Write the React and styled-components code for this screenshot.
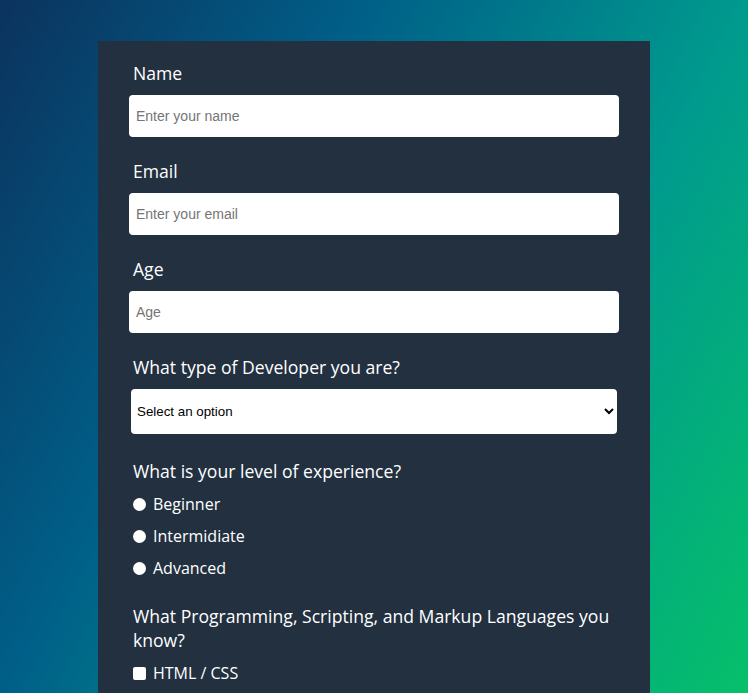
import React from "react";
import styled, { createGlobalStyle } from "styled-components";

const GlobalStyle = createGlobalStyle`
  html {
    min-height: 100%;
    background: linear-gradient(118deg, #0b335e 0%, #005f88 33%, #009a8e 67%, #06c06a 100%) fixed;
  }
  body {
    margin: 0;
    font-family: "Open Sans", "Noto Sans", sans-serif;
  }
`;

const Page = styled.div`
  display: flex;
  padding: 41px 0 40px 98px;
`;

const Form = styled.form`
  width: 552px;
  box-sizing: border-box;
  padding: 20px 31px 30px;
  background: #22303f;
  display: flex;
  flex-direction: column;
  gap: 22px;
`;

const Group = styled.div`
  display: flex;
  flex-direction: column;
  gap: ${(p) => p.$gap ?? 10}px;
`;

const Question = styled.label`
  display: block;
  padding-left: 4px;
  font-size: 17.6px;
  line-height: 24px;
  color: #ffffff;
`;

const TextInput = styled.input`
  box-sizing: border-box;
  width: 100%;
  height: 42px;
  margin: 0;
  padding: 0 7px;
  border: none;
  border-radius: 4px;
  background: #ffffff;
  font-family: "Liberation Sans", Arial, sans-serif;
  font-size: 14px;
  color: #222;
  outline: none;
  &::placeholder {
    color: #757575;
  }
`;

const Select = styled.select`
  box-sizing: border-box;
  height: 45px;
  margin: 0 2px 3px;
  padding: 0 0 0 2px;
  border: none;
  border-radius: 4px;
  background: #ffffff;
  color: #000;
  font-family: "Liberation Sans", Arial, sans-serif;
  font-size: 13.33px;
`;

const OptionList = styled.div`
  display: flex;
  flex-direction: column;
  gap: 8px;
  padding-bottom: ${(p) => p.$extra ?? 0}px;
`;

const OptionRow = styled.label`
  display: flex;
  align-items: center;
  gap: 7px;
  padding-left: 4px;
  font-size: 16px;
  line-height: 24px;
  color: #ffffff;
`;

const Mark = styled.input`
  appearance: none;
  width: 13px;
  height: 13px;
  margin: 0;
  background: #ffffff;
  border: none;
  border-radius: ${(p) => (p.type === "radio" ? "50%" : "2px")};
  flex: none;
`;

const fields = [
  { label: "Name", placeholder: "Enter your name", type: "text" },
  { label: "Email", placeholder: "Enter your email", type: "email" },
  { label: "Age", placeholder: "Age", type: "number" },
];

export default function App() {
  return (
    <>
      <GlobalStyle />
      <Page>
        <Form onSubmit={(e) => e.preventDefault()}>
          {fields.map((f) => (
            <Group key={f.label}>
              <Question htmlFor={f.label}>{f.label}</Question>
              <TextInput id={f.label} type={f.type} placeholder={f.placeholder} />
            </Group>
          ))}
          <Group>
            <Question htmlFor="dev">What type of Developer you are?</Question>
            <Select id="dev" defaultValue="">
              <option value="" disabled>
                Select an option
              </option>
              <option>Front-end</option>
              <option>Back-end</option>
              <option>Full-stack</option>
            </Select>
          </Group>
          <Group $gap={9}>
            <Question as="div">What is your level of experience?</Question>
            <OptionList $extra={2}>
              {["Beginner", "Intermidiate", "Advanced"].map((o) => (
                <OptionRow key={o}>
                  <Mark type="radio" name="level" value={o} />
                  {o}
                </OptionRow>
              ))}
            </OptionList>
          </Group>
          <Group $gap={9}>
            <Question as="div">
              What Programming, Scripting, and Markup Languages you know?
            </Question>
            <OptionList>
              {["HTML / CSS", "JavaScript", "Python", "Java", "C / C++"].map((o) => (
                <OptionRow key={o}>
                  <Mark type="checkbox" value={o} />
                  {o}
                </OptionRow>
              ))}
            </OptionList>
          </Group>
        </Form>
      </Page>
    </>
  );
}
